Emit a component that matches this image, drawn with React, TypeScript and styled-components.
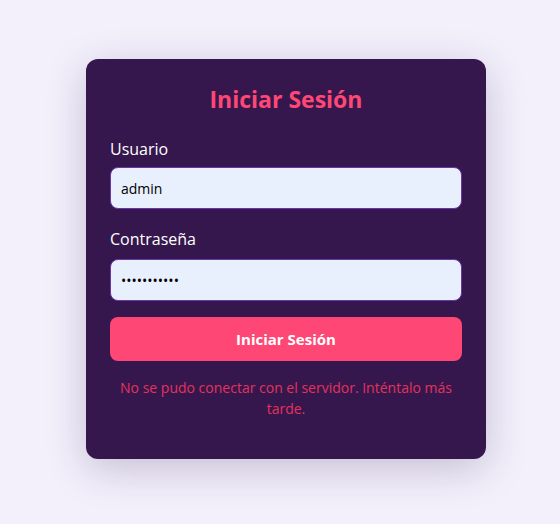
import React from "react";
import styled, { createGlobalStyle } from "styled-components";

const GlobalStyle = createGlobalStyle`
  * {
    box-sizing: border-box;
  }
  body {
    margin: 0;
    background: #f3f0fc;
    font-family: "Segoe UI", "Open Sans", "Noto Sans", sans-serif;
  }
`;

const Page = styled.div`
  min-height: 524px;
  display: flex;
  justify-content: center;
  padding: 59px 0 0 12px;
`;

const Card = styled.form`
  width: 400px;
  height: 400px;
  background: #36174d;
  border-radius: 12px;
  padding: 24px;
  box-shadow: 0 10px 40px rgba(40, 20, 70, 0.22);
  display: flex;
  flex-direction: column;
`;

const Title = styled.h2`
  margin: 0 0 24px;
  line-height: 32px;
  font-size: 23px;
  font-weight: 700;
  color: #ff4775;
  text-align: center;
`;

const Field = styled.div`
  display: flex;
  flex-direction: column;
  gap: 8px;
  margin-bottom: 20px;

  & + & {
    gap: 10px;
  }

  &:last-of-type {
    margin-bottom: 16px;
  }
`;

const Label = styled.label`
  font-size: 16px;
  line-height: 20px;
  color: #ffffff;
`;

const Input = styled.input`
  height: 42px;
  width: 100%;
  padding: 0 10px;
  border: 1px solid #6b35a8;
  border-radius: 8px;
  background: #e8f0fe;
  color: #000;
  font-family: inherit;
  font-size: 14px;
  outline: none;
`;

const Button = styled.button`
  height: 44px;
  width: 100%;
  border: none;
  border-radius: 8px;
  background: #ff4775;
  color: #fff;
  font-family: inherit;
  font-size: 15px;
  font-weight: 700;
  cursor: pointer;
`;

const ErrorText = styled.p`
  margin: 16px 0 0;
  padding: 0 4px;
  font-size: 14px;
  line-height: 21px;
  color: #e2335c;
  text-align: center;
`;

export default function App() {
  return (
    <>
      <GlobalStyle />
      <Page>
        <Card onSubmit={(e) => e.preventDefault()}>
          <Title>Iniciar Sesión</Title>
          <Field>
            <Label htmlFor="user">Usuario</Label>
            <Input id="user" type="text" defaultValue="admin" />
          </Field>
          <Field>
            <Label htmlFor="pass">Contraseña</Label>
            <Input id="pass" type="password" defaultValue="admin123456" />
          </Field>
          <Button type="submit">Iniciar Sesión</Button>
          <ErrorText>
            No se pudo conectar con el servidor. Inténtalo más tarde.
          </ErrorText>
        </Card>
      </Page>
    </>
  );
}
